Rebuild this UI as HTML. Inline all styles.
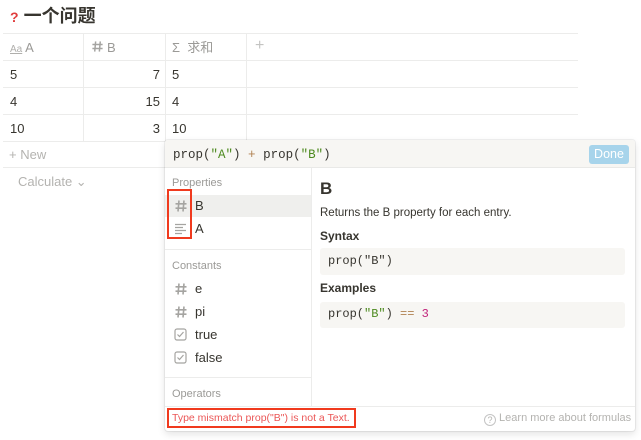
<!DOCTYPE html>
<html><head><meta charset="utf-8"><style>
*{box-sizing:border-box;margin:0;padding:0}
body{width:641px;height:440px;overflow:hidden;background:#fff;font-family:"Liberation Sans","Noto Sans CJK SC",sans-serif;color:#37352f;position:relative;font-size:12px}
.a{position:absolute}
.mono{font-family:"Liberation Mono",monospace}
.g{color:#9b9a97}
.hl{border-top:1px solid #ececeb}
.vl{border-left:1px solid #ececeb}
.t{font-size:13px;line-height:16px}
</style></head><body>
<svg width="0" height="0" style="position:absolute"><defs><symbol id="h" viewBox="0 0 14 14"><path d="M5 1.5L4 12.5M10 1.5L9 12.5M1.5 4.8H12.5M1.5 9.2H12.5" stroke="#a5a4a1" stroke-width="1.6" fill="none"/></symbol></defs></svg>
<div class="a" style="left:10px;top:5px;font-size:18px;line-height:22px;font-weight:bold;color:#37352f"><span style="color:#e03e3e;font-size:14px">?</span> 一个问题</div>
<div class="a hl" style="left:3px;top:33px;width:575px"></div>
<div class="a hl" style="left:3px;top:60px;width:575px"></div>
<div class="a hl" style="left:3px;top:87px;width:575px"></div>
<div class="a hl" style="left:3px;top:114px;width:575px"></div>
<div class="a hl" style="left:3px;top:141px;width:575px"></div>
<div class="a hl" style="left:3px;top:167px;width:575px"></div>
<div class="a vl" style="left:83px;top:33px;height:108px"></div>
<div class="a vl" style="left:165px;top:33px;height:108px"></div>
<div class="a vl" style="left:246px;top:33px;height:108px"></div>
<div class="a g t" style="left:10px;top:40px"><span style="font-size:10px;text-decoration:underline;color:#b0afac">Aa</span> A</div>
<svg class="a" style="left:91px;top:40px" width="13" height="13"><use href="#h"/></svg>
<div class="a g t" style="left:107px;top:40px">B</div>
<div class="a g t" style="left:172px;top:40px">Σ&nbsp; 求和</div>
<div class="a g" style="left:255px;top:37px;font-size:16px;color:#c4c4c2">+</div>
<div class="a t" style="left:10px;top:67px">5</div>
<div class="a t" style="left:10px;top:94px">4</div>
<div class="a t" style="left:10px;top:121px">10</div>
<div class="a t" style="left:120px;top:67px;width:40px;text-align:right">7</div>
<div class="a t" style="left:120px;top:94px;width:40px;text-align:right">15</div>
<div class="a t" style="left:120px;top:121px;width:40px;text-align:right">3</div>
<div class="a t" style="left:172px;top:67px">5</div>
<div class="a t" style="left:172px;top:94px">4</div>
<div class="a t" style="left:172px;top:121px">10</div>
<div class="a t" style="left:9px;top:147px;color:#b4b3b0">+ New</div>
<div class="a t" style="left:18px;top:174px;color:#b4b3b0">Calculate ⌄</div>
<div class="a" style="left:165px;top:140px;width:470px;height:291px;background:#fff;box-shadow:0 0 0 1px rgba(15,15,15,.06),0 3px 8px rgba(15,15,15,.12);border-radius:3px;overflow:hidden">
 <div class="a" style="left:0;top:0;width:470px;height:28px;background:#f7f6f3;border-bottom:1px solid #e9e9e7"></div>
 <div class="a mono" style="left:8px;top:7px;font-size:12.5px;line-height:16px;color:#37352f">prop(<span style="color:#4d8a1f">"A"</span>) <span style="color:#b08050">+</span> prop(<span style="color:#4d8a1f">"B"</span>)</div>
 <div class="a" style="left:424px;top:5px;width:40px;height:19px;background:#a7d4eb;color:#fff;border-radius:3px;font-size:12.5px;text-align:center;line-height:19px">Done</div>
 <div class="a vl" style="left:146px;top:28px;height:238px"></div>
 <div class="a g" style="left:7px;top:37px;font-size:11px">Properties</div>
 <div class="a" style="left:0;top:55px;width:146px;height:22px;background:#efefed"></div>
 <svg class="a" style="left:9px;top:59px" width="14" height="14"><use href="#h"/></svg>
 <div class="a t" style="left:30px;top:58px">B</div>
 <svg class="a" style="left:9px;top:83px" width="13" height="12"><path d="M1 1.5H12M1 4.5H9M1 7.5H12M1 10.5H8" stroke="#a5a4a1" stroke-width="1.2"/></svg>
 <div class="a t" style="left:30px;top:81px">A</div>
 <div class="a" style="left:2px;top:49px;width:25px;height:50px;border:2px solid #f03a1e"></div>
 <div class="a hl" style="left:0;top:109px;width:146px"></div>
 <div class="a g" style="left:7px;top:120px;font-size:11px">Constants</div>
 <svg class="a" style="left:9px;top:142px" width="14" height="14"><use href="#h"/></svg>
 <div class="a t" style="left:30px;top:141px">e</div>
 <svg class="a" style="left:9px;top:165px" width="14" height="14"><use href="#h"/></svg>
 <div class="a t" style="left:30px;top:164px">pi</div>
 <svg class="a" style="left:9px;top:188px" width="13" height="13"><rect x="1" y="1" width="11" height="11" rx="2" fill="none" stroke="#a5a4a1" stroke-width="1.2"/><path d="M3.5 6.5L5.5 8.5L9.5 4" stroke="#a5a4a1" stroke-width="1.2" fill="none"/></svg>
 <div class="a t" style="left:30px;top:187px">true</div>
 <svg class="a" style="left:9px;top:211px" width="13" height="13"><rect x="1" y="1" width="11" height="11" rx="2" fill="none" stroke="#a5a4a1" stroke-width="1.2"/><path d="M3.5 6.5L5.5 8.5L9.5 4" stroke="#a5a4a1" stroke-width="1.2" fill="none"/></svg>
 <div class="a t" style="left:30px;top:210px">false</div>
 <div class="a hl" style="left:0;top:237px;width:146px"></div>
 <div class="a g" style="left:7px;top:248px;font-size:11px">Operators</div>
 <div class="a" style="left:155px;top:39px;font-size:17px;font-weight:bold">B</div>
 <div class="a" style="left:155px;top:67px;font-size:11.5px">Returns the B property for each entry.</div>
 <div class="a" style="left:155px;top:89px;font-size:12px;font-weight:bold">Syntax</div>
 <div class="a" style="left:155px;top:108px;width:305px;height:27px;background:#f7f6f3;border-radius:3px"></div>
 <div class="a mono" style="left:163px;top:114px;font-size:12px">prop("B")</div>
 <div class="a" style="left:155px;top:141px;font-size:12px;font-weight:bold">Examples</div>
 <div class="a" style="left:155px;top:162px;width:305px;height:26px;background:#f7f6f3;border-radius:3px"></div>
 <div class="a mono" style="left:163px;top:167px;font-size:12px">prop(<span style="color:#4d8a1f">"B"</span>) <span style="color:#b08050">==</span> <span style="color:#c0237a">3</span></div>
 <div class="a hl" style="left:0;top:266px;width:470px"></div>
 <div class="a" style="left:2px;top:268px;width:189px;height:20px;border:2px solid #f03a1e"></div>
 <div class="a" style="left:7px;top:272px;font-size:10.5px;line-height:13px;color:#eb5757;white-space:nowrap">Type mismatch prop("B") is not a Text.</div>
 <div class="a" style="left:319px;top:272px;font-size:11px;line-height:13px;color:#b4b3b0"><span style="display:inline-block;width:12px;height:12px;border:1px solid #c4c4c4;border-radius:50%;font-size:9px;text-align:center;line-height:11px;vertical-align:-2px">?</span> Learn more about formulas</div>
</div>
</body></html>
